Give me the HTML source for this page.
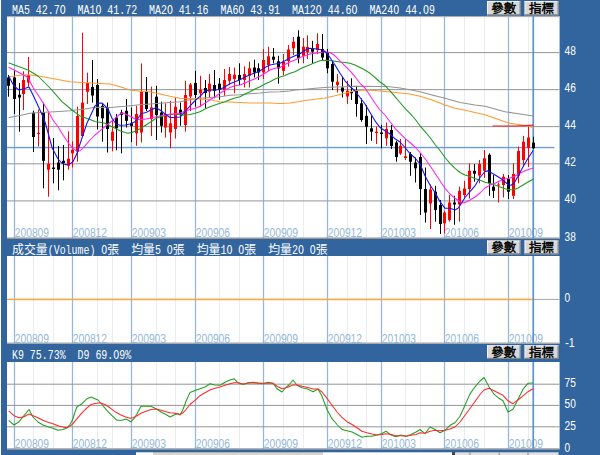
<!DOCTYPE html>
<html><head><meta charset="utf-8"><title>chart</title>
<style>html,body{margin:0;padding:0;background:#32659d;}body{width:600px;height:455px;overflow:hidden;}svg{display:block}.m{font-family:"Liberation Mono",monospace;font-size:13.4px;fill:#fff}.a{font-family:"Liberation Sans",sans-serif;font-size:12px;fill:#fff}.d{font-family:"Liberation Sans",sans-serif;font-size:12px;fill:#94b8da}.c{font-family:"Liberation Sans","Noto Sans CJK TC",sans-serif;font-size:12px;fill:#fff}.b{font-family:"Liberation Sans","Noto Sans CJK TC",sans-serif;font-size:12.5px;fill:#000;stroke:#000;stroke-width:0.44}</style></head><body>
<svg width="600" height="455" viewBox="0 0 600 455">
<defs>
<clipPath id="c1"><rect x="7" y="16" width="553" height="223"/></clipPath>
<clipPath id="c2"><rect x="7" y="256" width="553" height="88"/></clipPath>
<clipPath id="c3"><rect x="7" y="362" width="553" height="87.5"/></clipPath>
</defs>
<rect width="600" height="455" fill="#32659d"/>
<rect x="0" y="0" width="1" height="455" fill="#fff"/>
<rect x="7" y="16" width="552.6" height="223" fill="#fff"/>
<rect x="33" y="16" width="1" height="223" fill="#e9ecf0"/>
<rect x="53" y="16" width="1" height="223" fill="#e9ecf0"/>
<rect x="97" y="16" width="1" height="223" fill="#e9ecf0"/>
<rect x="112" y="16" width="1" height="223" fill="#e9ecf0"/>
<rect x="156" y="16" width="1" height="223" fill="#e9ecf0"/>
<rect x="175" y="16" width="1" height="223" fill="#e9ecf0"/>
<rect x="219" y="16" width="1" height="223" fill="#e9ecf0"/>
<rect x="239" y="16" width="1" height="223" fill="#e9ecf0"/>
<rect x="283" y="16" width="1" height="223" fill="#e9ecf0"/>
<rect x="303" y="16" width="1" height="223" fill="#e9ecf0"/>
<rect x="347" y="16" width="1" height="223" fill="#e9ecf0"/>
<rect x="366" y="16" width="1" height="223" fill="#e9ecf0"/>
<rect x="405" y="16" width="1" height="223" fill="#e9ecf0"/>
<rect x="420" y="16" width="1" height="223" fill="#e9ecf0"/>
<rect x="464" y="16" width="1" height="223" fill="#e9ecf0"/>
<rect x="484" y="16" width="1" height="223" fill="#e9ecf0"/>
<rect x="528" y="16" width="1" height="223" fill="#e9ecf0"/>
<rect x="13.85" y="16" width="1.3" height="223" fill="#96b8dc"/>
<rect x="71.85" y="16" width="1.3" height="223" fill="#96b8dc"/>
<rect x="130.85" y="16" width="1.3" height="223" fill="#96b8dc"/>
<rect x="194.85" y="16" width="1.3" height="223" fill="#96b8dc"/>
<rect x="262.85" y="16" width="1.3" height="223" fill="#96b8dc"/>
<rect x="326.85" y="16" width="1.3" height="223" fill="#96b8dc"/>
<rect x="380.85" y="16" width="1.3" height="223" fill="#96b8dc"/>
<rect x="443.85" y="16" width="1.3" height="223" fill="#96b8dc"/>
<rect x="507.85" y="16" width="1.3" height="223" fill="#96b8dc"/>
<rect x="7" y="16.075" width="552.6" height="1.05" fill="#aaa"/>
<rect x="7" y="52.075" width="552.6" height="1.05" fill="#9a9a9a"/>
<rect x="7" y="89.075" width="552.6" height="1.05" fill="#9a9a9a"/>
<rect x="7" y="126.075" width="552.6" height="1.05" fill="#9a9a9a"/>
<rect x="7" y="163.275" width="552.6" height="1.05" fill="#9a9a9a"/>
<rect x="7" y="200.375" width="552.6" height="1.05" fill="#9a9a9a"/>
<rect x="7" y="237.5" width="552.6" height="1.4" fill="#8e8e8e"/>
<text class="d" x="14.7" y="236.9" textLength="34.4" lengthAdjust="spacingAndGlyphs">200809</text>
<text class="d" x="72.7" y="236.9" textLength="34.4" lengthAdjust="spacingAndGlyphs">200812</text>
<text class="d" x="131.7" y="236.9" textLength="34.4" lengthAdjust="spacingAndGlyphs">200903</text>
<text class="d" x="195.7" y="236.9" textLength="34.4" lengthAdjust="spacingAndGlyphs">200906</text>
<text class="d" x="263.7" y="236.9" textLength="34.4" lengthAdjust="spacingAndGlyphs">200909</text>
<text class="d" x="327.7" y="236.9" textLength="34.4" lengthAdjust="spacingAndGlyphs">200912</text>
<text class="d" x="381.7" y="236.9" textLength="34.4" lengthAdjust="spacingAndGlyphs">201003</text>
<text class="d" x="444.7" y="236.9" textLength="34.4" lengthAdjust="spacingAndGlyphs">201006</text>
<text class="d" x="508.7" y="236.9" textLength="34.4" lengthAdjust="spacingAndGlyphs">201009</text>
<rect x="7" y="146.85" width="547.5" height="1.4" fill="#6c9dd4"/>
<rect x="532.4" y="16" width="1.7" height="223" fill="#5f93cf"/>
<g clip-path="url(#c1)">
<rect x="8" y="75" width="1" height="21.7" fill="#000"/>
<rect x="7" y="77.5" width="3" height="8.3" fill="#000"/>
<rect x="14" y="70" width="1" height="44" fill="#000"/>
<rect x="13" y="77.5" width="3" height="21.5" fill="#000"/>
<rect x="19" y="83" width="1" height="48.7" fill="#000"/>
<rect x="18" y="94.7" width="3" height="2.8" fill="#000"/>
<rect x="23" y="71.3" width="1" height="38.7" fill="#ff0000"/>
<rect x="22" y="80" width="3" height="14" fill="#ff0000"/>
<rect x="28" y="57" width="1" height="29.7" fill="#ff0000"/>
<rect x="27" y="75" width="3" height="7.5" fill="#ff0000"/>
<rect x="33" y="110.7" width="1" height="41.3" fill="#000"/>
<rect x="32" y="112.7" width="3" height="24.3" fill="#000"/>
<rect x="38" y="109.3" width="1" height="37.2" fill="#ff0000"/>
<rect x="37" y="132.8" width="3" height="1.2" fill="#ff0000"/>
<rect x="43" y="102.7" width="1" height="85.6" fill="#000"/>
<rect x="42" y="112" width="3" height="48.8" fill="#000"/>
<rect x="48" y="112.7" width="1" height="84" fill="#ff0000"/>
<rect x="47" y="163.7" width="3" height="6" fill="#ff0000"/>
<rect x="53" y="138" width="1" height="45.3" fill="#000"/>
<rect x="52" y="167.5" width="3" height="1.5" fill="#000"/>
<rect x="58" y="146" width="1" height="44.3" fill="#000"/>
<rect x="57" y="162.5" width="3" height="7.2" fill="#000"/>
<rect x="63" y="145" width="1" height="35.3" fill="#000"/>
<rect x="62" y="160.8" width="3" height="2.2" fill="#000"/>
<rect x="68" y="131.3" width="1" height="38.4" fill="#ff0000"/>
<rect x="67" y="158.7" width="3" height="7.1" fill="#ff0000"/>
<rect x="72" y="141.3" width="1" height="26.2" fill="#ff0000"/>
<rect x="71" y="149.7" width="3" height="3.6" fill="#ff0000"/>
<rect x="77" y="106.7" width="1" height="55" fill="#ff0000"/>
<rect x="76" y="116" width="3" height="35.7" fill="#ff0000"/>
<rect x="82" y="32.7" width="1" height="104.3" fill="#ff0000"/>
<rect x="81" y="102.7" width="3" height="33.3" fill="#ff0000"/>
<rect x="87" y="72.7" width="1" height="31.3" fill="#ff0000"/>
<rect x="86" y="83" width="3" height="8.7" fill="#ff0000"/>
<rect x="92" y="60" width="1" height="42.6" fill="#000"/>
<rect x="91" y="87" width="3" height="8.5" fill="#000"/>
<rect x="97" y="79" width="1" height="50.5" fill="#000"/>
<rect x="96" y="85" width="3" height="31.5" fill="#000"/>
<rect x="102" y="104" width="1" height="37.7" fill="#000"/>
<rect x="101" y="105.8" width="3" height="12.5" fill="#000"/>
<rect x="107" y="102.5" width="1" height="50" fill="#000"/>
<rect x="106" y="108.3" width="3" height="20.7" fill="#000"/>
<rect x="112" y="120" width="1" height="31.3" fill="#ff0000"/>
<rect x="111" y="131.7" width="3" height="9.1" fill="#ff0000"/>
<rect x="116" y="114" width="1" height="36.3" fill="#000"/>
<rect x="115" y="117.5" width="3" height="10.8" fill="#000"/>
<rect x="121" y="109.7" width="1" height="43.6" fill="#000"/>
<rect x="120" y="112.5" width="3" height="2.5" fill="#000"/>
<rect x="126" y="99" width="1" height="28.5" fill="#000"/>
<rect x="125" y="110.8" width="3" height="10" fill="#000"/>
<rect x="131" y="107.5" width="1" height="34.5" fill="#000"/>
<rect x="130" y="123.3" width="3" height="2.5" fill="#000"/>
<rect x="136" y="105.8" width="1" height="40" fill="#ff0000"/>
<rect x="135" y="114" width="3" height="19.3" fill="#ff0000"/>
<rect x="141" y="63.5" width="1" height="79" fill="#ff0000"/>
<rect x="140" y="91.7" width="3" height="40.8" fill="#ff0000"/>
<rect x="146" y="77" width="1" height="34" fill="#000"/>
<rect x="145" y="91.7" width="3" height="17.3" fill="#000"/>
<rect x="151" y="86.7" width="1" height="49.3" fill="#ff0000"/>
<rect x="150" y="107.5" width="3" height="11.5" fill="#ff0000"/>
<rect x="156" y="85.8" width="1" height="54.2" fill="#000"/>
<rect x="155" y="96.7" width="3" height="18.3" fill="#000"/>
<rect x="161" y="101.7" width="1" height="30.8" fill="#000"/>
<rect x="160" y="112.5" width="3" height="13.3" fill="#000"/>
<rect x="165" y="103.3" width="1" height="34.2" fill="#ff0000"/>
<rect x="164" y="114" width="3" height="13.5" fill="#ff0000"/>
<rect x="170" y="100.8" width="1" height="47.5" fill="#ff0000"/>
<rect x="169" y="123.3" width="3" height="9.2" fill="#ff0000"/>
<rect x="175" y="97.5" width="1" height="41" fill="#ff0000"/>
<rect x="174" y="106.7" width="3" height="22.3" fill="#ff0000"/>
<rect x="180" y="102.5" width="1" height="23.3" fill="#000"/>
<rect x="179" y="109.7" width="3" height="4" fill="#000"/>
<rect x="185" y="80.8" width="1" height="50.9" fill="#ff0000"/>
<rect x="184" y="95" width="3" height="30" fill="#ff0000"/>
<rect x="190" y="83" width="1" height="28" fill="#ff0000"/>
<rect x="189" y="84.5" width="3" height="12" fill="#ff0000"/>
<rect x="195" y="70.8" width="1" height="35.9" fill="#000"/>
<rect x="194" y="83" width="3" height="12" fill="#000"/>
<rect x="200" y="75.8" width="1" height="30.9" fill="#ff0000"/>
<rect x="199" y="89.7" width="3" height="3.6" fill="#ff0000"/>
<rect x="205" y="80" width="1" height="28.3" fill="#000"/>
<rect x="204" y="88" width="3" height="5" fill="#000"/>
<rect x="209" y="74" width="1" height="23.5" fill="#ff0000"/>
<rect x="208" y="83.7" width="3" height="8" fill="#ff0000"/>
<rect x="214" y="70" width="1" height="28.3" fill="#000"/>
<rect x="213" y="85" width="3" height="5.8" fill="#000"/>
<rect x="219" y="78" width="1" height="21.7" fill="#000"/>
<rect x="218" y="83.7" width="3" height="6.3" fill="#000"/>
<rect x="224" y="69" width="1" height="26.8" fill="#ff0000"/>
<rect x="223" y="80" width="3" height="10" fill="#ff0000"/>
<rect x="229" y="67" width="1" height="18" fill="#ff0000"/>
<rect x="228" y="74" width="3" height="6.8" fill="#ff0000"/>
<rect x="234" y="67.5" width="1" height="25.8" fill="#ff0000"/>
<rect x="233" y="74.7" width="3" height="4.3" fill="#ff0000"/>
<rect x="239" y="63.3" width="1" height="21.7" fill="#000"/>
<rect x="238" y="75" width="3" height="5" fill="#000"/>
<rect x="244" y="66.3" width="1" height="21.2" fill="#ff0000"/>
<rect x="243" y="74" width="3" height="6" fill="#ff0000"/>
<rect x="249" y="61.7" width="1" height="25.8" fill="#ff0000"/>
<rect x="248" y="68.3" width="3" height="7.5" fill="#ff0000"/>
<rect x="254" y="59.7" width="1" height="17.8" fill="#000"/>
<rect x="253" y="67.5" width="3" height="5" fill="#000"/>
<rect x="258" y="63.3" width="1" height="16.7" fill="#000"/>
<rect x="257" y="68.3" width="3" height="4.2" fill="#000"/>
<rect x="263" y="49" width="1" height="30" fill="#ff0000"/>
<rect x="262" y="60" width="3" height="12.5" fill="#ff0000"/>
<rect x="268" y="46.7" width="1" height="24.1" fill="#ff0000"/>
<rect x="267" y="56.3" width="3" height="8.7" fill="#ff0000"/>
<rect x="273" y="48" width="1" height="15.3" fill="#000"/>
<rect x="272" y="56.7" width="3" height="3" fill="#000"/>
<rect x="278" y="55.8" width="1" height="27.9" fill="#000"/>
<rect x="277" y="61.3" width="3" height="7" fill="#000"/>
<rect x="283" y="54" width="1" height="21" fill="#ff0000"/>
<rect x="282" y="61.7" width="3" height="9.1" fill="#ff0000"/>
<rect x="288" y="45" width="1" height="21.7" fill="#ff0000"/>
<rect x="287" y="49.5" width="3" height="11.5" fill="#ff0000"/>
<rect x="293" y="37" width="1" height="18" fill="#ff0000"/>
<rect x="292" y="41.7" width="3" height="6.6" fill="#ff0000"/>
<rect x="298" y="30.3" width="1" height="33" fill="#000"/>
<rect x="297" y="36.7" width="3" height="21.6" fill="#000"/>
<rect x="303" y="38" width="1" height="25.3" fill="#ff0000"/>
<rect x="302" y="46.7" width="3" height="9.1" fill="#ff0000"/>
<rect x="307" y="35.3" width="1" height="23.7" fill="#ff0000"/>
<rect x="306" y="47" width="3" height="5" fill="#ff0000"/>
<rect x="312" y="40.8" width="1" height="22.5" fill="#000"/>
<rect x="311" y="48.3" width="3" height="3.4" fill="#000"/>
<rect x="317" y="33.3" width="1" height="20.7" fill="#ff0000"/>
<rect x="316" y="44" width="3" height="6" fill="#ff0000"/>
<rect x="322" y="34" width="1" height="26" fill="#000"/>
<rect x="321" y="49" width="3" height="8.5" fill="#000"/>
<rect x="327" y="49" width="1" height="24.3" fill="#000"/>
<rect x="326" y="52.5" width="3" height="15.8" fill="#000"/>
<rect x="332" y="60.8" width="1" height="29.2" fill="#000"/>
<rect x="331" y="64" width="3" height="17.7" fill="#000"/>
<rect x="337" y="74" width="1" height="18.5" fill="#ff0000"/>
<rect x="336" y="81.7" width="3" height="3.3" fill="#ff0000"/>
<rect x="342" y="76.7" width="1" height="20.8" fill="#000"/>
<rect x="341" y="87.5" width="3" height="4" fill="#000"/>
<rect x="347" y="80.8" width="1" height="23.2" fill="#ff0000"/>
<rect x="346" y="90.8" width="3" height="5.7" fill="#ff0000"/>
<rect x="351" y="78.3" width="1" height="21.7" fill="#000"/>
<rect x="350" y="91.7" width="3" height="1.6" fill="#000"/>
<rect x="356" y="85.8" width="1" height="30.9" fill="#000"/>
<rect x="355" y="90.5" width="3" height="13.5" fill="#000"/>
<rect x="361" y="98.3" width="1" height="23.4" fill="#000"/>
<rect x="360" y="103.3" width="3" height="16.7" fill="#000"/>
<rect x="366" y="105" width="1" height="39" fill="#000"/>
<rect x="365" y="115.8" width="3" height="10.9" fill="#000"/>
<rect x="371" y="115.8" width="1" height="25" fill="#000"/>
<rect x="370" y="128.3" width="3" height="3.4" fill="#000"/>
<rect x="376" y="126.7" width="1" height="17.3" fill="#ff0000"/>
<rect x="375" y="131.7" width="3" height="1.3" fill="#ff0000"/>
<rect x="381" y="124.7" width="1" height="23.6" fill="#000"/>
<rect x="380" y="132.5" width="3" height="1.5" fill="#000"/>
<rect x="386" y="122.5" width="1" height="23.3" fill="#ff0000"/>
<rect x="385" y="129" width="3" height="9.3" fill="#ff0000"/>
<rect x="391" y="125" width="1" height="24" fill="#000"/>
<rect x="390" y="130" width="3" height="16" fill="#000"/>
<rect x="396" y="140.8" width="1" height="20.9" fill="#000"/>
<rect x="395" y="142.5" width="3" height="14.5" fill="#000"/>
<rect x="400" y="139" width="1" height="16" fill="#ff0000"/>
<rect x="399" y="145.8" width="3" height="7.7" fill="#ff0000"/>
<rect x="405" y="139" width="1" height="21" fill="#ff0000"/>
<rect x="404" y="156.3" width="3" height="1.7" fill="#ff0000"/>
<rect x="410" y="152" width="1" height="23.8" fill="#000"/>
<rect x="409" y="154" width="3" height="7.7" fill="#000"/>
<rect x="415" y="157.5" width="1" height="25" fill="#000"/>
<rect x="414" y="162.5" width="3" height="5.8" fill="#000"/>
<rect x="420" y="153" width="1" height="62" fill="#000"/>
<rect x="419" y="157" width="3" height="32" fill="#000"/>
<rect x="425" y="167.5" width="1" height="55" fill="#000"/>
<rect x="424" y="189" width="3" height="23.5" fill="#000"/>
<rect x="430" y="184.5" width="1" height="44.5" fill="#ff0000"/>
<rect x="429" y="189.5" width="3" height="14" fill="#ff0000"/>
<rect x="435" y="185.8" width="1" height="35.9" fill="#000"/>
<rect x="434" y="191.7" width="3" height="18.3" fill="#000"/>
<rect x="440" y="200" width="1" height="34" fill="#000"/>
<rect x="439" y="205" width="3" height="19" fill="#000"/>
<rect x="444" y="210.8" width="1" height="22.5" fill="#ff0000"/>
<rect x="443" y="212.5" width="3" height="10.8" fill="#ff0000"/>
<rect x="449" y="195" width="1" height="26.7" fill="#ff0000"/>
<rect x="448" y="202.5" width="3" height="17.5" fill="#ff0000"/>
<rect x="454" y="195.8" width="1" height="28.9" fill="#000"/>
<rect x="453" y="202.5" width="3" height="2" fill="#000"/>
<rect x="459" y="186.7" width="1" height="35" fill="#ff0000"/>
<rect x="458" y="190.8" width="3" height="13.7" fill="#ff0000"/>
<rect x="464" y="180.8" width="1" height="16.7" fill="#ff0000"/>
<rect x="463" y="188.5" width="3" height="6.5" fill="#ff0000"/>
<rect x="469" y="163.3" width="1" height="35.2" fill="#ff0000"/>
<rect x="468" y="170.8" width="3" height="18.2" fill="#ff0000"/>
<rect x="474" y="164" width="1" height="17.7" fill="#000"/>
<rect x="473" y="170.8" width="3" height="2.9" fill="#000"/>
<rect x="479" y="160" width="1" height="23.3" fill="#ff0000"/>
<rect x="478" y="164" width="3" height="11.5" fill="#ff0000"/>
<rect x="484" y="150" width="1" height="28" fill="#ff0000"/>
<rect x="483" y="158.3" width="3" height="12.5" fill="#ff0000"/>
<rect x="489" y="153.3" width="1" height="42.5" fill="#000"/>
<rect x="488" y="154.8" width="3" height="28.5" fill="#000"/>
<rect x="493" y="175" width="1" height="23" fill="#000"/>
<rect x="492" y="186.7" width="3" height="4.1" fill="#000"/>
<rect x="498" y="182.5" width="1" height="20" fill="#ff0000"/>
<rect x="497" y="184.5" width="3" height="1" fill="#ff0000"/>
<rect x="503" y="174" width="1" height="23.5" fill="#ff0000"/>
<rect x="502" y="176.7" width="3" height="8.3" fill="#ff0000"/>
<rect x="508" y="175" width="1" height="24" fill="#000"/>
<rect x="507" y="179" width="3" height="12.7" fill="#000"/>
<rect x="513" y="163.3" width="1" height="35.7" fill="#ff0000"/>
<rect x="512" y="174" width="3" height="21.8" fill="#ff0000"/>
<rect x="518" y="146.7" width="1" height="36.6" fill="#ff0000"/>
<rect x="517" y="151" width="3" height="24.8" fill="#ff0000"/>
<rect x="523" y="136" width="1" height="30.7" fill="#ff0000"/>
<rect x="522" y="141.7" width="3" height="18.3" fill="#ff0000"/>
<rect x="528" y="126.7" width="1" height="40.3" fill="#ff0000"/>
<rect x="527" y="137.5" width="3" height="10.3" fill="#ff0000"/>
<rect x="533" y="136.8" width="1" height="12.2" fill="#000"/>
<rect x="532" y="142.6" width="3" height="5.6" fill="#000"/>
<polyline points="9,117.5 20,115.5 30,113.3 40,112.5 55,111.7 70,110.8 85,109 95,107.3 110,107.5 125,106.3 140,104.7 150,104 160,103.3 170,102.5 180,101.7 190,99.8 200,98.3 210,97.5 220,96.7 230,95.3 240,94.7 250,93.7 260,93 270,92 280,91.7 290,91 295,90 305,89.2 315,88.3 325,87.5 335,87 345,86.7 355,86.3 365,86.3 375,86.5 385,86.5 390,86.8 400,88 410,89.7 420,91.7 430,94.5 445,98.3 460,102.5 475,105 485,106.3 495,109 505,111.7 515,113.3 525,114.7 533,116" fill="none" stroke="#939393" stroke-width="1.15" stroke-linejoin="round" stroke-linecap="round"/>
<polyline points="9,76.7 20,75.3 28,74.7 40,76.3 55,79 70,81.7 82,82.5 92,83 100,83.5 110,84 120,86.7 130,90 140,91.3 150,91.7 160,94 170,96.3 180,98.3 190,98.6 200,99 210,99.7 215,100.8 220,101.7 230,102 240,102.5 250,103 260,103 270,103 280,103.5 285,103.3 290,103 295,102.3 300,101.5 305,100.4 315,99.2 325,98 335,95.8 345,93.3 355,90.8 365,90 375,90.6 385,91.5 390,92 400,93 410,94 420,96.3 430,99.3 445,105 455,108.3 465,110.3 475,112.5 485,114.7 495,118.3 505,121.7 510,123.3 520,124.7 530,126 533,128" fill="none" stroke="#ff9a2e" stroke-width="1.05" stroke-linejoin="round" stroke-linecap="round"/>
<polyline points="493,126 515,126 525,125.6 533,125.2" fill="none" stroke="#e8252b" stroke-width="1.2" stroke-linejoin="round" stroke-linecap="round"/>
<polyline points="9,63 28,70 38,76 50,88 62,101.7 72,110 80,116 90,119.5 95,121.5 100,122.3 105,123.3 110,125.8 115,128.3 120,130.8 125,132.5 128,133.3 132,132.5 136,130.8 141,128.3 146,125 151,121.7 156,118.3 161,116.7 166,115.3 170,114.7 175,114 180,114.7 185,115.3 190,114.5 195,113.3 200,111.7 205,109 210,106.7 215,105 220,103.3 225,101.7 230,99.7 235,98 240,96.7 245,94 250,91.7 255,89 260,86.7 265,84 270,81.7 275,79 280,77 285,75.4 290,73.2 295,71.7 300,69 305,66.7 310,64.7 315,62.5 320,60.8 325,60.3 330,60.5 335,61.3 340,62 345,62.5 350,63.3 355,65 360,67.5 365,70 370,73.3 375,77.5 380,82 385,85.5 390,90.8 395,96.7 400,102.5 405,108.3 410,113.3 415,119 420,125.8 425,131.7 430,137.5 435,144.5 440,150.5 445,157.5 450,163.3 455,168.3 460,172.5 465,175 470,176.5 475,178.5 480,180.3 485,182.2 490,183.5 495,185 500,187 505,188.7 510,189.7 514,189.7 518,188 523,185 528,182 533,179.2" fill="none" stroke="#1f9a1f" stroke-width="1.05" stroke-linejoin="round" stroke-linecap="round"/>
<polyline points="9,67.5 20,73 28,77.5 33,87.5 40,98 47,109 53,120 58,126.7 63,135 68,142.5 73,148.3 77,151.3 80,150.8 85,145.8 90,140 95,135 100,130.8 105,126.7 110,122.5 115,118.3 120,114 123,113 127,114.7 131,116.7 135,119 140,119.7 146,119 151,118 156,116.7 161,115.8 166,114.7 170,114 175,114 180,113 185,111.2 190,109.5 195,108.4 200,106.2 205,103.2 210,99.8 215,96.7 220,93.3 225,90.3 230,87.5 235,85.8 240,85 245,83 250,80.8 255,78.7 260,76.3 265,73.3 270,70 275,68.3 280,67.5 285,64.5 290,62 295,60 300,57.5 305,55.8 310,54 315,53.3 320,52.5 325,51.7 330,52.5 335,55.8 340,60.8 345,65.8 350,70.8 355,76.7 360,83.3 365,88 370,95.5 375,103.3 380,110 385,115 390,121.7 395,128.3 400,133.3 405,138.3 410,142.5 415,147 420,152.5 425,158.5 430,165.8 435,173.3 440,180.8 445,188.3 450,194 455,198.3 460,201.7 464,203 470,200 475,197 480,193 485,188 490,185 495,183.3 500,180.8 505,179 510,178 515,176.3 520,173.3 525,170.8 530,169 533,168.3" fill="none" stroke="#ff22ee" stroke-width="1.05" stroke-linejoin="round" stroke-linecap="round"/>
<polyline points="9,76.7 14,86 19,90 24,88.7 29,87 33.5,96 38.5,106.7 43,116.7 45,122 48,132.5 52,147.5 55,153.3 58,159 62,163.3 66,164.7 70,163.7 73,161.7 77,153.3 80,144 83,135 87,123 90,116.7 95,105.8 98,103.3 102,103 105,105.8 108,109 112,118.3 116,124 120,125.3 125,125 130,124 135,121.7 138,118.3 141,113.7 146,112.5 151,110 156,107.5 161,110.8 166,114.7 170,117.5 175,117.5 180,117 185,111.7 190,106 195,100.7 200,96.3 205,91 210,90 215,90 220,89.5 225,86.7 230,83.7 235,81.7 240,79.7 245,77 250,74.7 255,73 260,70.8 265,67.5 270,65 275,64 280,63.3 285,60.8 290,58 295,55.8 300,53.7 303,51.7 307,49 310,48.3 315,48.7 320,49.5 323,50 327,53.3 330,57.5 335,65 340,73.3 345,80.8 350,86.5 355,91 360,97.5 365,104 370,112.5 375,120.8 380,127.5 385,130.8 390,134 395,138.8 400,142 405,147.5 410,153.6 415,158 420,164 425,175.8 430,185 435,192.5 440,201.7 445,208.3 450,208.3 455,210 458,208.3 462,202.5 465,197.5 470,191.7 475,185.8 480,177.5 485,171.5 488,170.9 493,173.7 498,176.7 503,180 508,184.7 511,185.3 514,183.3 518,176.3 523,166.7 528,158.3 533,150.8" fill="none" stroke="#1515f0" stroke-width="1.1" stroke-linejoin="round" stroke-linecap="round"/>
</g>
<rect x="7" y="256" width="552.6" height="87.6" fill="#fff"/>
<rect x="33" y="256" width="1" height="87.6" fill="#e9ecf0"/>
<rect x="53" y="256" width="1" height="87.6" fill="#e9ecf0"/>
<rect x="97" y="256" width="1" height="87.6" fill="#e9ecf0"/>
<rect x="112" y="256" width="1" height="87.6" fill="#e9ecf0"/>
<rect x="156" y="256" width="1" height="87.6" fill="#e9ecf0"/>
<rect x="175" y="256" width="1" height="87.6" fill="#e9ecf0"/>
<rect x="219" y="256" width="1" height="87.6" fill="#e9ecf0"/>
<rect x="239" y="256" width="1" height="87.6" fill="#e9ecf0"/>
<rect x="283" y="256" width="1" height="87.6" fill="#e9ecf0"/>
<rect x="303" y="256" width="1" height="87.6" fill="#e9ecf0"/>
<rect x="347" y="256" width="1" height="87.6" fill="#e9ecf0"/>
<rect x="366" y="256" width="1" height="87.6" fill="#e9ecf0"/>
<rect x="405" y="256" width="1" height="87.6" fill="#e9ecf0"/>
<rect x="420" y="256" width="1" height="87.6" fill="#e9ecf0"/>
<rect x="464" y="256" width="1" height="87.6" fill="#e9ecf0"/>
<rect x="484" y="256" width="1" height="87.6" fill="#e9ecf0"/>
<rect x="528" y="256" width="1" height="87.6" fill="#e9ecf0"/>
<rect x="13.85" y="256" width="1.3" height="87.6" fill="#96b8dc"/>
<rect x="71.85" y="256" width="1.3" height="87.6" fill="#96b8dc"/>
<rect x="130.85" y="256" width="1.3" height="87.6" fill="#96b8dc"/>
<rect x="194.85" y="256" width="1.3" height="87.6" fill="#96b8dc"/>
<rect x="262.85" y="256" width="1.3" height="87.6" fill="#96b8dc"/>
<rect x="326.85" y="256" width="1.3" height="87.6" fill="#96b8dc"/>
<rect x="380.85" y="256" width="1.3" height="87.6" fill="#96b8dc"/>
<rect x="443.85" y="256" width="1.3" height="87.6" fill="#96b8dc"/>
<rect x="507.85" y="256" width="1.3" height="87.6" fill="#96b8dc"/>
<rect x="7" y="298.875" width="552.6" height="1.05" fill="#aaa"/>
<rect x="7" y="342.575" width="552.6" height="1.05" fill="#999"/>
<rect x="9" y="298.7" width="524" height="1.5" fill="#ffa53c"/>
<g clip-path="url(#c2)">
<text class="d" x="14.7" y="343" textLength="34.4" lengthAdjust="spacingAndGlyphs">200809</text>
<text class="d" x="72.7" y="343" textLength="34.4" lengthAdjust="spacingAndGlyphs">200812</text>
<text class="d" x="131.7" y="343" textLength="34.4" lengthAdjust="spacingAndGlyphs">200903</text>
<text class="d" x="195.7" y="343" textLength="34.4" lengthAdjust="spacingAndGlyphs">200906</text>
<text class="d" x="263.7" y="343" textLength="34.4" lengthAdjust="spacingAndGlyphs">200909</text>
<text class="d" x="327.7" y="343" textLength="34.4" lengthAdjust="spacingAndGlyphs">200912</text>
<text class="d" x="381.7" y="343" textLength="34.4" lengthAdjust="spacingAndGlyphs">201003</text>
<text class="d" x="444.7" y="343" textLength="34.4" lengthAdjust="spacingAndGlyphs">201006</text>
<text class="d" x="508.7" y="343" textLength="34.4" lengthAdjust="spacingAndGlyphs">201009</text>
</g>
<rect x="532.4" y="256" width="1.7" height="87.6" fill="#5f93cf"/>
<rect x="7" y="362" width="552.6" height="87.3" fill="#fff"/>
<rect x="33" y="362" width="1" height="87.3" fill="#e9ecf0"/>
<rect x="53" y="362" width="1" height="87.3" fill="#e9ecf0"/>
<rect x="97" y="362" width="1" height="87.3" fill="#e9ecf0"/>
<rect x="112" y="362" width="1" height="87.3" fill="#e9ecf0"/>
<rect x="156" y="362" width="1" height="87.3" fill="#e9ecf0"/>
<rect x="175" y="362" width="1" height="87.3" fill="#e9ecf0"/>
<rect x="219" y="362" width="1" height="87.3" fill="#e9ecf0"/>
<rect x="239" y="362" width="1" height="87.3" fill="#e9ecf0"/>
<rect x="283" y="362" width="1" height="87.3" fill="#e9ecf0"/>
<rect x="303" y="362" width="1" height="87.3" fill="#e9ecf0"/>
<rect x="347" y="362" width="1" height="87.3" fill="#e9ecf0"/>
<rect x="366" y="362" width="1" height="87.3" fill="#e9ecf0"/>
<rect x="405" y="362" width="1" height="87.3" fill="#e9ecf0"/>
<rect x="420" y="362" width="1" height="87.3" fill="#e9ecf0"/>
<rect x="464" y="362" width="1" height="87.3" fill="#e9ecf0"/>
<rect x="484" y="362" width="1" height="87.3" fill="#e9ecf0"/>
<rect x="528" y="362" width="1" height="87.3" fill="#e9ecf0"/>
<rect x="13.85" y="362" width="1.3" height="87.3" fill="#96b8dc"/>
<rect x="71.85" y="362" width="1.3" height="87.3" fill="#96b8dc"/>
<rect x="130.85" y="362" width="1.3" height="87.3" fill="#96b8dc"/>
<rect x="194.85" y="362" width="1.3" height="87.3" fill="#96b8dc"/>
<rect x="262.85" y="362" width="1.3" height="87.3" fill="#96b8dc"/>
<rect x="326.85" y="362" width="1.3" height="87.3" fill="#96b8dc"/>
<rect x="380.85" y="362" width="1.3" height="87.3" fill="#96b8dc"/>
<rect x="443.85" y="362" width="1.3" height="87.3" fill="#96b8dc"/>
<rect x="507.85" y="362" width="1.3" height="87.3" fill="#96b8dc"/>
<rect x="7" y="383.675" width="552.6" height="1.05" fill="#9a9a9a"/>
<rect x="7" y="404.875" width="552.6" height="1.05" fill="#9a9a9a"/>
<rect x="7" y="426.275" width="552.6" height="1.05" fill="#9a9a9a"/>
<rect x="7" y="448.275" width="552.6" height="1.05" fill="#999"/>
<g clip-path="url(#c3)">
<text class="d" x="14.7" y="448.3" textLength="34.4" lengthAdjust="spacingAndGlyphs">200809</text>
<text class="d" x="72.7" y="448.3" textLength="34.4" lengthAdjust="spacingAndGlyphs">200812</text>
<text class="d" x="131.7" y="448.3" textLength="34.4" lengthAdjust="spacingAndGlyphs">200903</text>
<text class="d" x="195.7" y="448.3" textLength="34.4" lengthAdjust="spacingAndGlyphs">200906</text>
<text class="d" x="263.7" y="448.3" textLength="34.4" lengthAdjust="spacingAndGlyphs">200909</text>
<text class="d" x="327.7" y="448.3" textLength="34.4" lengthAdjust="spacingAndGlyphs">200912</text>
<text class="d" x="381.7" y="448.3" textLength="34.4" lengthAdjust="spacingAndGlyphs">201003</text>
<text class="d" x="444.7" y="448.3" textLength="34.4" lengthAdjust="spacingAndGlyphs">201006</text>
<text class="d" x="508.7" y="448.3" textLength="34.4" lengthAdjust="spacingAndGlyphs">201009</text>
</g>
<rect x="532.4" y="362" width="1.7" height="87.3" fill="#5f93cf"/>
<g clip-path="url(#c3)">
<polyline points="9,420.7 14,425 19,421.7 24,415.7 29,409.5 33,417 38,422 43,425 48,426.7 53,428.3 58,430.3 63,429.5 67,427.8 70,424.5 73,418.7 75,412 77,406.7 82,403.7 87,398.7 91,397 95,398.7 98,400 102,404.5 107,410.7 112,415.7 117,420.3 122,420.3 126,419 131,421.7 134,418.7 137,413.7 141,406.2 146,406.2 151,406.2 156,408.7 161,412 166,414.5 170,417 175,414.5 178,413.7 180,415 183,409.5 186,401.2 190,392.4 195,390.5 200,388.7 205,387 210,383.7 215,385 220,385.3 225,382.3 230,380 234,378.7 238,382.8 243,384.5 248,382.8 253,382.3 258,383.3 263,383.7 268,382.3 273,383.3 277,388.7 282,392 286,387.5 289,385 293,380 297,385.3 302,387.8 307,388.7 313,391.7 318,389 322,396.2 327,409.5 332,418.7 337,424.5 342,429.5 347,430.7 352,432 357,434.5 362,437.3 367,436.2 372,436.2 377,435 382,433.5 386,431.2 391,435 396,436.7 401,435 406,436.2 411,434.5 416,432 420,429.5 425,433.7 430,427 435,429.5 440,432.8 445,430.3 450,425.3 455,422.8 460,416.2 465,405.3 470,393.9 475,386.8 480,381 484,377.5 489,386.7 494,394.2 499,398.3 503,400.8 508,412 513,409.2 518,399.2 523,389.2 528,383.3 533,383" fill="none" stroke="#22a022" stroke-width="1.05" stroke-linejoin="round" stroke-linecap="round"/>
<polyline points="9,411.2 14,415.7 19,417.8 24,416.7 29,414 33,415.7 38,417.8 43,420.3 48,422.3 53,423.7 58,425.7 63,427 67,427.8 70,426.2 73,423.7 77,418.7 82,412.8 87,407.8 91,404.5 95,403.5 100,402.8 105,404.5 110,407.8 115,411.7 120,414.5 125,416.7 130,418.3 133,417.8 137,415.7 141,413.3 146,411.2 151,409.5 156,409 161,410.3 166,411.7 170,412.8 175,413.3 180,414.5 183,412.8 186,409.5 190,404.5 195,400.3 200,395.7 205,392.8 210,390 215,388.3 220,387 225,385.3 230,383.7 234,382.8 238,382.8 243,384 248,383.3 253,382.8 263,383.3 273,383.3 277,386.2 282,388.7 286,387.8 289,386.7 293,385 297,385 302,386.2 307,387.3 313,389 318,389 322,392 327,398.3 332,405.3 337,412 342,417.3 347,421.7 352,424.5 357,427.8 362,431.2 367,432.8 372,434 377,435 382,434.5 386,433.7 391,434.5 396,435.7 401,435.7 406,436.2 411,435.3 416,434.5 420,432.8 425,433.3 430,431.2 435,430.3 440,430.7 445,430.3 450,429 455,427 460,422 465,415.3 470,408.5 475,401.5 480,394.5 484,390 489,388.3 494,390.8 499,393.3 503,395.3 508,400.8 513,403.7 518,400 523,395.8 528,391.7 533,388.7" fill="none" stroke="#ff2a2a" stroke-width="1.05" stroke-linejoin="round" stroke-linecap="round"/>
</g>
<text class="m" x="12" y="13.6" textLength="422.947" lengthAdjust="spacingAndGlyphs" fill="#fff" xml:space="preserve">MA5 42.7O  MA1O 41.72  MA2O 41.16  MA6O 43.91  MA12O 44.6O  MA24O 44.O9</text>
<text class="c" x="12" y="254.1" textLength="35.742" lengthAdjust="spacingAndGlyphs">成交量</text>
<text class="m" x="47.742" y="254.1" textLength="59.57" lengthAdjust="spacingAndGlyphs" fill="#fff" xml:space="preserve">(Volume) O</text>
<text class="c" x="107.312" y="254.1" textLength="11.914" lengthAdjust="spacingAndGlyphs">張</text>
<text class="c" x="131.14" y="254.1" textLength="23.828" lengthAdjust="spacingAndGlyphs">均量</text>
<text class="m" x="154.968" y="254.1" textLength="17.871" lengthAdjust="spacingAndGlyphs" fill="#fff" xml:space="preserve">5 O</text>
<text class="c" x="172.839" y="254.1" textLength="11.914" lengthAdjust="spacingAndGlyphs">張</text>
<text class="c" x="196.667" y="254.1" textLength="23.828" lengthAdjust="spacingAndGlyphs">均量</text>
<text class="m" x="220.495" y="254.1" textLength="23.828" lengthAdjust="spacingAndGlyphs" fill="#fff" xml:space="preserve">1O O</text>
<text class="c" x="244.323" y="254.1" textLength="11.914" lengthAdjust="spacingAndGlyphs">張</text>
<text class="c" x="268.151" y="254.1" textLength="23.828" lengthAdjust="spacingAndGlyphs">均量</text>
<text class="m" x="291.979" y="254.1" textLength="23.828" lengthAdjust="spacingAndGlyphs" fill="#fff" xml:space="preserve">2O O</text>
<text class="c" x="315.807" y="254.1" textLength="11.914" lengthAdjust="spacingAndGlyphs">張</text>
<text class="m" x="12" y="359.1" textLength="119.14" lengthAdjust="spacingAndGlyphs" fill="#fff" xml:space="preserve">K9 75.73%  D9 69.O9%</text>
<text class="a" x="564.6" y="55.3" textLength="11.3" lengthAdjust="spacingAndGlyphs">48</text>
<text class="a" x="564.6" y="92.3" textLength="11.3" lengthAdjust="spacingAndGlyphs">46</text>
<text class="a" x="564.6" y="129.3" textLength="11.3" lengthAdjust="spacingAndGlyphs">44</text>
<text class="a" x="564.6" y="166.3" textLength="11.3" lengthAdjust="spacingAndGlyphs">42</text>
<text class="a" x="564.6" y="203.3" textLength="11.3" lengthAdjust="spacingAndGlyphs">40</text>
<text class="a" x="564.6" y="240.5" textLength="11.3" lengthAdjust="spacingAndGlyphs">38</text>
<text class="a" x="564.6" y="302.3" textLength="5.65" lengthAdjust="spacingAndGlyphs">0</text>
<text class="a" x="565.2" y="346.6" textLength="9.5" lengthAdjust="spacingAndGlyphs">-1</text>
<text class="a" x="564.6" y="386.8" textLength="11.3" lengthAdjust="spacingAndGlyphs">75</text>
<text class="a" x="564.6" y="408.3" textLength="11.3" lengthAdjust="spacingAndGlyphs">50</text>
<text class="a" x="564.6" y="429.8" textLength="11.3" lengthAdjust="spacingAndGlyphs">25</text>
<text class="a" x="564.6" y="452.3" textLength="5.65" lengthAdjust="spacingAndGlyphs">0</text>
<rect x="487" y="1" width="33.6" height="14.3" fill="#d8d8d8"/>
<rect x="487" y="1" width="33.6" height="1" fill="#f4f4f4"/>
<rect x="487" y="1" width="1" height="14.3" fill="#f4f4f4"/>
<rect x="487" y="14.3" width="33.6" height="1" fill="#777"/>
<rect x="519.6" y="1" width="1" height="14.3" fill="#777"/>
<text class="b" x="491.3" y="12.6" textLength="25" lengthAdjust="spacingAndGlyphs">參數</text>
<rect x="524.6" y="1" width="34" height="14.3" fill="#d8d8d8"/>
<rect x="524.6" y="1" width="34" height="1" fill="#f4f4f4"/>
<rect x="524.6" y="1" width="1" height="14.3" fill="#f4f4f4"/>
<rect x="524.6" y="14.3" width="34" height="1" fill="#777"/>
<rect x="557.6" y="1" width="1" height="14.3" fill="#777"/>
<text class="b" x="529.1" y="12.6" textLength="25" lengthAdjust="spacingAndGlyphs">指標</text>
<rect x="487" y="240.5" width="33.6" height="13.8" fill="#d8d8d8"/>
<rect x="487" y="240.5" width="33.6" height="1" fill="#f4f4f4"/>
<rect x="487" y="240.5" width="1" height="13.8" fill="#f4f4f4"/>
<rect x="487" y="253.3" width="33.6" height="1" fill="#777"/>
<rect x="519.6" y="240.5" width="1" height="13.8" fill="#777"/>
<text class="b" x="491.3" y="252.1" textLength="25" lengthAdjust="spacingAndGlyphs">參數</text>
<rect x="524.6" y="240.5" width="34" height="13.8" fill="#d8d8d8"/>
<rect x="524.6" y="240.5" width="34" height="1" fill="#f4f4f4"/>
<rect x="524.6" y="240.5" width="1" height="13.8" fill="#f4f4f4"/>
<rect x="524.6" y="253.3" width="34" height="1" fill="#777"/>
<rect x="557.6" y="240.5" width="1" height="13.8" fill="#777"/>
<text class="b" x="529.1" y="252.1" textLength="25" lengthAdjust="spacingAndGlyphs">指標</text>
<rect x="487" y="345.3" width="33.6" height="13.5" fill="#d8d8d8"/>
<rect x="487" y="345.3" width="33.6" height="1" fill="#f4f4f4"/>
<rect x="487" y="345.3" width="1" height="13.5" fill="#f4f4f4"/>
<rect x="487" y="357.8" width="33.6" height="1" fill="#777"/>
<rect x="519.6" y="345.3" width="1" height="13.5" fill="#777"/>
<text class="b" x="491.3" y="356.9" textLength="25" lengthAdjust="spacingAndGlyphs">參數</text>
<rect x="524.6" y="345.3" width="34" height="13.5" fill="#d8d8d8"/>
<rect x="524.6" y="345.3" width="34" height="1" fill="#f4f4f4"/>
<rect x="524.6" y="345.3" width="1" height="13.5" fill="#f4f4f4"/>
<rect x="524.6" y="357.8" width="34" height="1" fill="#777"/>
<rect x="557.6" y="345.3" width="1" height="13.5" fill="#777"/>
<text class="b" x="529.1" y="356.9" textLength="25" lengthAdjust="spacingAndGlyphs">指標</text>
<rect x="136" y="452.3" width="17" height="3" fill="#fff"/>
<rect x="153" y="452.3" width="170" height="3" fill="#d9d5c9"/>
<rect x="323" y="452.3" width="129" height="3" fill="#fff"/>
<rect x="452" y="452.3" width="3" height="3" fill="#444"/>
<rect x="455" y="452.3" width="103.5" height="3" fill="#e2e2e2"/>
<rect x="469.5" y="452.3" width="1" height="3" fill="#888"/>
<rect x="498.7" y="452.3" width="1" height="3" fill="#888"/>
<rect x="527.5" y="452.3" width="1" height="3" fill="#888"/>
</svg></body></html>
